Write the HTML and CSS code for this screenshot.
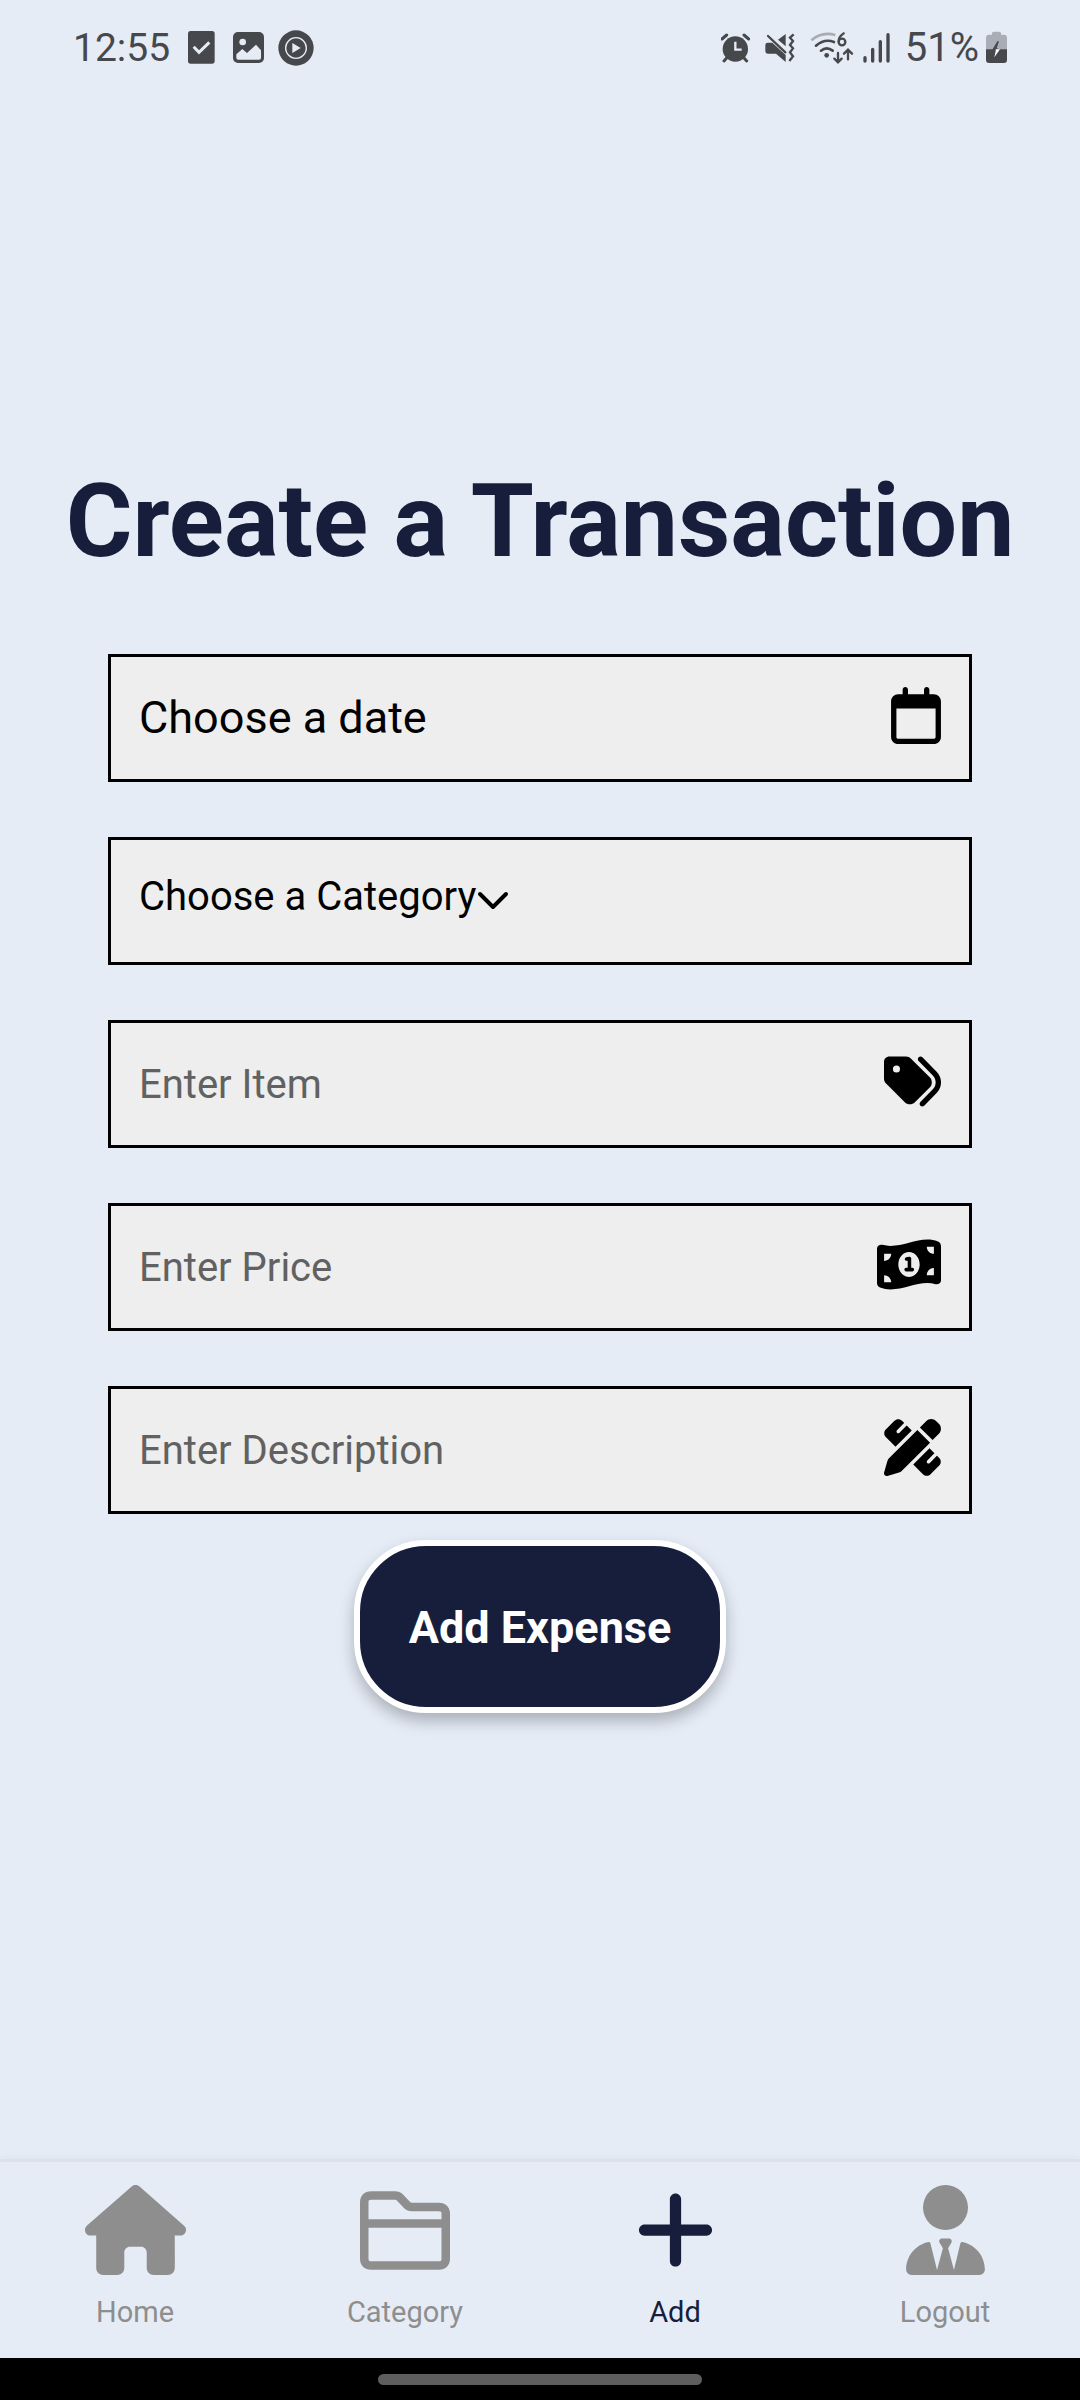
FILE: index.html
```html
<!DOCTYPE html>
<html lang="en">
<head>
<meta charset="utf-8">
<meta name="viewport" content="width=device-width, initial-scale=1">
<title>Create a Transaction</title>
<link rel="stylesheet" href="styles.css">
</head>
<body>
<header class="status">
  <div class="status-left">
    <span class="status-text">12:55</span>
    <svg width="27" height="33" viewBox="417 63 81 99" aria-hidden="true"><rect x="417" y="63" width="80" height="98" rx="8" fill="#46484c"/><path d="M434 110l16 17 31-30" fill="none" stroke="#e5ecf6" stroke-width="9"/></svg>
    <svg width="31" height="31" viewBox="552 66 93 93" aria-hidden="true"><rect x="552" y="66" width="93" height="93" rx="15" fill="#46484c"/><circle cx="581" cy="96" r="10" fill="#e5ecf6"/><path d="M562 133l18-16 14 12 27-25 15 17v22q0 6-6 6h-62q-6 0-6-6z" fill="#e5ecf6"/></svg>
    <svg class="play" width="36" height="36" viewBox="686 58 108 108" aria-hidden="true"><circle cx="740" cy="112" r="53" fill="#46484c"/><circle cx="740" cy="112" r="31" fill="none" stroke="#e5ecf6" stroke-width="4"/><path d="M729 97v30l25-15z" fill="#e5ecf6"/></svg>
  </div>
  <div class="status-right">
    <svg width="29" height="30" viewBox="60 69 87 90" aria-hidden="true"><circle cx="103" cy="117" r="38" fill="#46484c"/><path d="M63 87l14-12M143 87l-14-12M77 144l-8 9M129 144l8 9" stroke="#46484c" stroke-width="9" stroke-linecap="round"/><path d="M103 95v24h19" fill="none" stroke="#e5ecf6" stroke-width="7"/></svg>
    <svg width="30" height="30" viewBox="195 69 90 90" aria-hidden="true"><path d="M257 72v37l-23-20zM196 105q0-7 7-7h14l40 37v21l-29-25h-25q-7 0-7-7z" fill="#46484c"/><path d="M204 78l52 49" stroke="#46484c" stroke-width="7" stroke-linecap="round"/><path d="M281 73l-11 10 9 10-9 12 9 10-9 12 9 12-11 14" fill="none" stroke="#46484c" stroke-width="7"/></svg>
    <svg width="44" height="33" viewBox="329 64 132 99" aria-hidden="true"><g fill="none" stroke="#46484c" stroke-width="8" stroke-linecap="round"><path d="M333 92q31-27 72-16" stroke="#a8acb3" stroke-linecap="butt"/><path d="M347 108q26-22 54-11M362 123q17-14 35 0"/><path d="M430 71q-17 12-15 25" stroke-width="7"/><circle cx="425" cy="97" r="10" stroke-width="7"/><path d="M413 130v26M402 147l11 11 11-11M443 149v-27M431 132l12-12 12 12" stroke-width="7"/></g><circle cx="379" cy="137" r="7" fill="#46484c"/></svg>
    <svg class="signal" width="27" height="30" viewBox="489 68 81 90" aria-hidden="true"><path d="M495 142v10M518 117v35M541 94v58M564 73v79" stroke="#46484c" stroke-width="10" stroke-linecap="round"/></svg>
    <span class="status-text percent">51%</span>
    <svg class="battery" width="21" height="33" viewBox="857 62 63 99" aria-hidden="true"><path d="M875 73v-4q0-5 5-5h17q5 0 5 5v4h9q9 0 9 9v36h-63V82q0-9 9-9z" fill="#a9aeb6"/><path d="M857 117h63v32q0 9-9 9h-45q-9 0-9-9z" fill="#46484c"/><path d="M891 93l-16 27h12l4-3h7l-9-3 7-21z" fill="#46484c"/><path d="M886 117h13l-17 24 4-18z" fill="#fff"/></svg>
  </div>
</header>

<main class="screen">
  <h1 class="title">Create a Transaction</h1>
  <form class="form">
    <button type="button" class="field date-field">
      <span>Choose a date</span>
      <svg class="icon" width="50" height="57" viewBox="0 0 448 512" aria-hidden="true"><path d="M152 24c0-13.3-10.7-24-24-24s-24 10.7-24 24V64H64C28.7 64 0 92.7 0 128v16 48V448c0 35.3 28.7 64 64 64H384c35.3 0 64-28.7 64-64V192 144 128c0-35.3-28.7-64-64-64H344V24c0-13.3-10.7-24-24-24s-24 10.7-24 24V64H152V24zM48 192H400V448c0 8.8-7.2 16-16 16H64c-8.8 0-16-7.2-16-16V192z"/></svg>
    </button>
    <div class="field category-field">
      <select class="select" aria-label="Category"><option>Choose a Category</option></select>
      <svg class="chevron" width="32" height="20" viewBox="0 0 32 20" aria-hidden="true"><path d="M3 3l13 13 13-13" fill="none" stroke="#000" stroke-width="4" stroke-linecap="round" stroke-linejoin="round"/></svg>
    </div>
    <label class="field">
      <input class="input" type="text" placeholder="Enter Item" aria-label="Item">
      <svg class="icon" width="57" height="57" viewBox="0 0 512 512" aria-hidden="true"><path d="M345 39.1L472.8 168.4c52.4 53 52.4 138.2 0 191.2L360.8 472.9c-9.3 9.4-24.5 9.5-33.9 .2s-9.5-24.5-.2-33.9L438.6 325.9c33.9-34.3 33.9-89.4 0-123.7L310.9 72.9c-9.3-9.4-9.2-24.6 .2-33.9s24.6-9.2 33.9 .2zM0 229.5V80C0 53.5 21.5 32 48 32H197.5c17 0 33.3 6.7 45.3 18.7l168 168c25 25 25 65.5 0 90.5L277.3 442.7c-25 25-65.5 25-90.5 0l-168-168C6.7 262.7 0 246.5 0 229.5zM144 144a32 32 0 1 0 -64 0 32 32 0 1 0 64 0z"/></svg>
    </label>
    <label class="field">
      <input class="input" type="text" inputmode="decimal" placeholder="Enter Price" aria-label="Price">
      <svg class="icon" width="64" height="57" viewBox="0 0 576 512" aria-hidden="true"><path d="M0 112.5V422.3c0 18 10.1 35 27 41.3c87 32.5 174 10.3 261-11.9c79.8-20.3 159.6-40.7 239.3-18.9c23 6.3 48.7-9.5 48.7-33.4V89.7c0-18-10.1-35-27-41.3C462 15.9 375 38.1 288 60.3C208.2 80.6 128.4 100.9 48.7 79.1C25.6 72.8 0 88.6 0 112.5zM288 368c-53 0-96-50.1-96-112s43-112 96-112s96 50.1 96 112s-43 112-96 112zM64 352c35.3 0 64 28.7 64 64H64V352zm64-192c0 35.3-28.7 64-64 64V160h64zM512 288v64H448c0-35.3 28.7-64 64-64zM448 96h64v64c-35.3 0-64-28.7-64-64z"/><path d="M266 206l26-4v100M262 302h56" fill="none" stroke="#000" stroke-width="32" stroke-linecap="round" stroke-linejoin="round"/></svg>
    </label>
    <label class="field">
      <input class="input" type="text" placeholder="Enter Description" aria-label="Description">
      <svg class="icon" width="57" height="57" viewBox="0 0 512 512" aria-hidden="true"><path d="M469.3 19.3l23.4 23.4c25 25 25 65.5 0 90.5l-56.4 56.4L322.3 75.7l56.4-56.4c25-25 65.5-25 90.5 0zM44.9 353.2L299.7 98.3 413.7 212.3 158.8 467.1c-6.7 6.7-15.1 11.6-24.2 14.2l-104 29.7c-8.4 2.4-17.4 .1-23.6-6.1s-8.5-15.2-6.1-23.6l29.7-104c2.6-9.2 7.5-17.5 14.2-24.2zM249.4 103.4L103.4 249.4 16 161.9c-18.7-18.7-18.7-49.1 0-67.9L94.1 16c18.7-18.7 49.1-18.7 67.9 0l19.8 19.8c-.3 .3-.7 .6-1 .9l-64 64c-6.2 6.2-6.2 16.4 0 22.6s16.4 6.2 22.6 0l64-64c.3-.3 .6-.7 .9-1l45.1 45.1zM408.6 262.6l45.1 45.1c-.3 .3-.7 .6-1 .9l-64 64c-6.2 6.2-6.2 16.4 0 22.6s16.4 6.2 22.6 0l64-64c.3-.3 .6-.7 .9-1L496 350.1c18.7 18.7 18.7 49.1 0 67.9L417.9 496c-18.7 18.7-49.1 18.7-67.9 0l-87.4-87.4L408.6 262.6z"/></svg>
    </label>
    <button type="submit" class="submit">Add Expense</button>
  </form>
</main>

<nav class="tabs">
  <a class="tab" href="#home">
    <svg width="101" height="90" viewBox="0 0 576 512" aria-hidden="true"><path fill="currentColor" d="M575.8 255.5C575.8 273.5 560.8 287.6 543.8 287.6H511.8L512.5 447.7C512.5 450.5 512.3 453.1 512 455.8V472C512 494.1 494.1 512 472 512H392C369.9 512 352 494.1 352 472V384C352 366.3 337.7 352 320 352H256C238.3 352 224 366.3 224 384V472C224 494.1 206.1 512 184 512H104C81.91 512 64 494.1 64 472V287.6H32.05C14.02 287.6 0 273.5 0 255.5C0 246.5 3.004 238.5 10.01 231.5L266.4 8.016C273.4 1.002 281.4 0 288.4 0C295.4 0 303.4 2.004 309.5 7.014L564.8 231.5C572.8 238.5 576.8 246.5 575.8 255.5z"/></svg>
    <span>Home</span>
  </a>
  <a class="tab" href="#category">
    <svg width="90" height="90" viewBox="0 0 90 90" aria-hidden="true"><path fill="none" stroke="currentColor" stroke-width="8.5" d="M4.25 73.5V17.5q0-7 7-7H35q3 0 5 2l7 7.5q2 2 5 2H78.75q7 0 7 7V73.5q0 7-7 7H11.25q-7 0-7-7zM4 38.5H86"/></svg>
    <span>Category</span>
  </a>
  <a class="tab active" href="#add" aria-current="page">
    <svg width="79" height="90" viewBox="0 0 448 512" aria-hidden="true"><path fill="currentColor" d="M256 80c0-17.7-14.3-32-32-32s-32 14.3-32 32V224H48c-17.7 0-32 14.3-32 32s14.3 32 32 32H192V432c0 17.7 14.3 32 32 32s32-14.3 32-32V288H400c17.7 0 32-14.3 32-32s-14.3-32-32-32H256V80z"/></svg>
    <span>Add</span>
  </a>
  <a class="tab" href="#logout">
    <svg width="79" height="90" viewBox="0 0 448 512" aria-hidden="true"><path fill="currentColor" d="M224 256A128 128 0 1 0 224 0a128 128 0 1 0 0 256zM209.1 359.2l-18.6-31c-6.4-10.7 1.3-24.2 13.7-24.2h39.5c12.4 0 20.1 13.6 13.7 24.2l-18.6 31 33.4 123.9 35.5-148c2-9 9-12 17-10C396 341 448 405 448 481.3c0 17-13.8 30.7-30.7 30.7H30.7C13.8 512 0 498.2 0 481.3C0 405 52 341 122.3 325.1c8-2 15 1 17 10l36.5 148 33.3-123.9z"/></svg>
    <span>Logout</span>
  </a>
</nav>
<div class="gesture"><div class="gesture-pill"></div></div>
</body>
</html>
```
FILE: styles.css
```css
* {
  box-sizing: border-box;
}

body {
  margin: 0;
  min-height: 100vh;
  display: flex;
  flex-direction: column;
  background: #e5ecf6;
  font-family: Roboto, "Liberation Sans", sans-serif;
}

svg {
  display: block;
  flex: none;
}

.status {
  display: flex;
  justify-content: space-between;
  align-items: center;
  height: 95px;
  padding: 0 73px;
  color: #46484c;
}

.status-left,
.status-right {
  display: flex;
  align-items: center;
  gap: 18px;
}

.play {
  margin-left: -4px;
}

.status-right {
  gap: 15px;
}

.signal {
  margin-left: -6px;
}

.battery {
  margin-left: -8px;
}

.status-text {
  font-size: 39px;
  line-height: 46px;
}

.percent {
  font-size: 40px;
}

.screen {
  flex: 1;
  display: flex;
  flex-direction: column;
  align-items: center;
  justify-content: center;
  padding-bottom: 81px;
}

.title {
  margin: 0 0 73px;
  font-size: 102px;
  line-height: 120px;
  font-weight: 700;
  color: #161e3c;
  text-align: center;
}

.form {
  width: 80%;
  display: flex;
  flex-direction: column;
  gap: 55px;
}

.field {
  display: flex;
  align-items: center;
  width: 100%;
  height: 128px;
  padding: 0 28px;
  border: 3px solid #000;
  border-radius: 0;
  background: #eee;
  color: #000;
  font: 40px/46px Roboto, "Liberation Sans", sans-serif;
}

.date-field {
  justify-content: space-between;
  font-size: 45px;
  line-height: 52px;
}

.icon {
  margin-bottom: 4px;
}

.input,
.select {
  border: 0;
  outline: 0;
  background: transparent;
  color: inherit;
  font: inherit;
}

.input {
  flex: 1;
  min-width: 0;
  padding: 2px 0 0;
}

.input::placeholder {
  color: #616161;
  opacity: 1;
}

.select {
  appearance: none;
  padding: 0 0 8px;
}

.submit {
  align-self: center;
  margin-top: -29px;
  padding: 56px 49px 53px;
  border: 6px solid #fff;
  border-radius: 72px;
  background: #161e3c;
  color: #fff;
  font: 700 45px/52px Roboto, "Liberation Sans", sans-serif;
  box-shadow: 0 8px 16px rgba(0, 0, 0, 0.26);
}

.tabs {
  display: grid;
  grid-template-columns: repeat(4, 1fr);
  border-top: 3px solid #dee2e8;
  padding: 23px 0 29px;
  box-shadow: 0 -2px 8px rgba(0, 0, 0, 0.03);
}

.tab {
  display: flex;
  flex-direction: column;
  align-items: center;
  gap: 20px;
  color: #8e8e8e;
  font-size: 29px;
  line-height: 34px;
  text-decoration: none;
}

.tab.active {
  color: #161e3c;
}

.gesture {
  display: flex;
  justify-content: center;
  align-items: center;
  height: 42px;
  background: #000;
}

.gesture-pill {
  width: 30%;
  height: 11px;
  border-radius: 6px;
  background: #5e5e5e;
}
```
